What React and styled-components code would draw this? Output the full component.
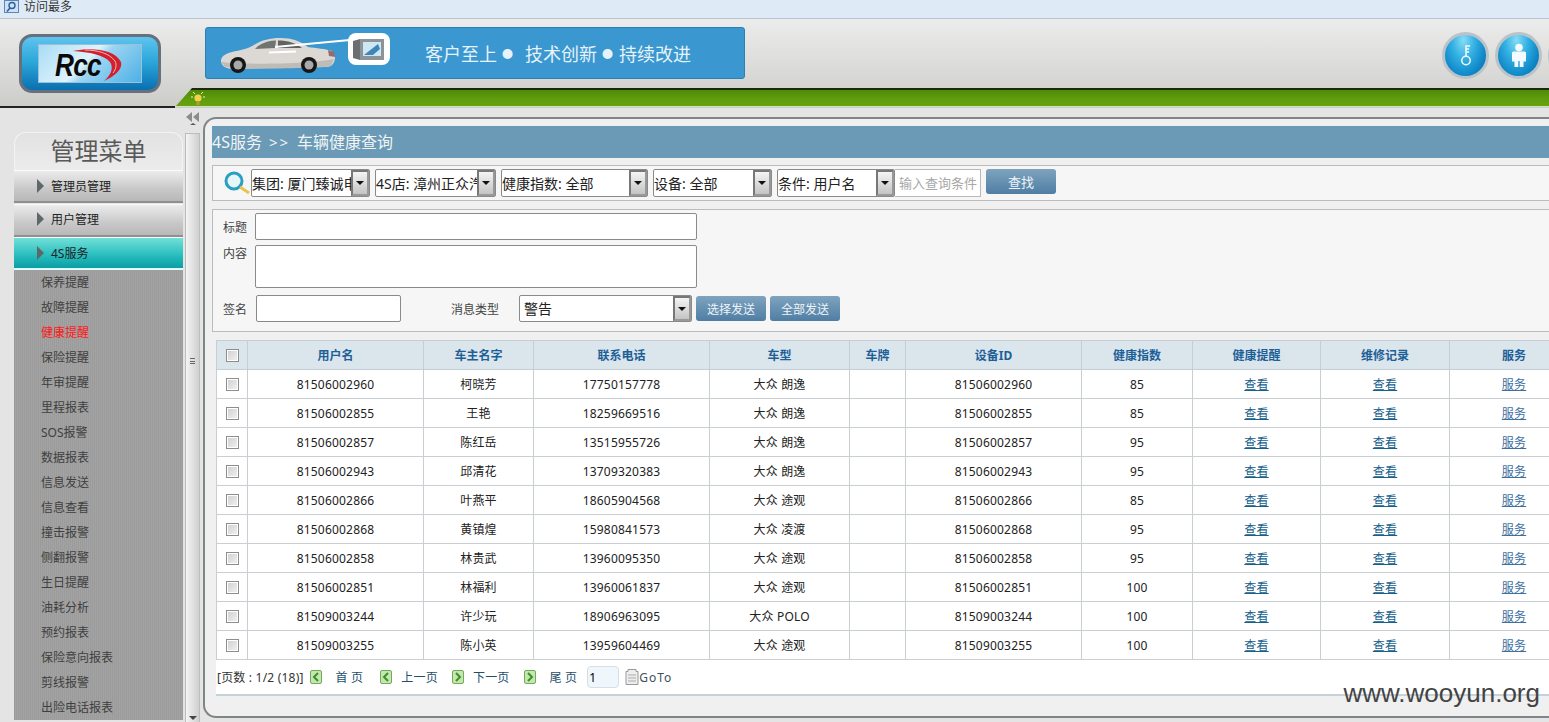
import React from 'react';
import styled, { createGlobalStyle } from 'styled-components';

const FONT = '"Noto Sans", "Noto Sans CJK SC", sans-serif';

const GlobalStyle = createGlobalStyle`
  html, body {
    margin: 0;
    height: 100%;
    overflow: hidden;
    background: #e4e4e4;
    font-family: ${FONT};
    font-size: 12px;
    color: #222;
  }
  * { box-sizing: border-box; }
`;

const Page = styled.div`
  position: relative;
  width: 100%;
  height: 722px;
  display: flex;
  flex-direction: column;
  overflow: hidden;
`;

const TitleBar = styled.div`
  height: 19px;
  flex: none;
  display: flex;
  align-items: center;
  gap: 5px;
  padding: 0 0 5px 4px;
  background: #dfeaf7;
  border-bottom: 1px solid #b9c3cc;
  color: #333;
  line-height: 12px;
`;

const Header = styled.header`
  height: 89px;
  flex: none;
  display: flex;
  flex-direction: column;
  background: linear-gradient(#ececec, #d6d6d4 70%, #cbcbc8);
  overflow: hidden;
`;

const HeaderTop = styled.div`
  height: 69px;
  flex: none;
  display: flex;
  align-items: flex-start;
`;

const Logo = styled.div`
  flex: none;
  width: 142px;
  height: 59px;
  margin: 15px 0 0 19px;
  padding: 7px 16px;
  border: 3px solid #66717c;
  border-radius: 13px;
  background: linear-gradient(#5ec4ee, #29a4d8 50%, #0a6fb0);
`;

const LogoPlate = styled.div`
  height: 39px;
  position: relative;
  border: 1px solid #9fc0d4;
  background: linear-gradient(135deg, #a8dcf6, #dff3fc 45%, #9ad4f2 55%, #4db1e6);
  display: flex;
  align-items: center;
  justify-content: center;
`;

const LogoWord = styled.span`
  position: relative;
  font-family: "Liberation Sans", sans-serif;
  font-style: italic;
  font-weight: 700;
  font-size: 32px;
  line-height: 1;
  letter-spacing: -1px;
  color: #0a0a0a;
  margin: 3px 24px 0 0;
  transform: scaleX(0.82);
`;

const Swoosh = styled.svg`
  position: absolute;
  left: 30px;
  top: 2px;
`;

const Banner = styled.div`
  flex: none;
  width: 540px;
  height: 52px;
  margin: 8px 0 0 44px;
  display: flex;
  align-items: center;
  background: #3a97d0;
  border: 1px solid #2c80b4;
  border-radius: 3px;
  color: #e6f3fb;
  font-size: 18px;
`;

const BannerText = styled.div`
  margin-left: 34px;
  display: flex;
  align-items: center;
  white-space: nowrap;
`;

const Bullet = styled.span`
  flex: none;
  width: ${p => p.$w}px;
  padding-left: 5px;
  font-size: 11px;
`;

const RoundGroup = styled.div`
  flex: none;
  display: flex;
  gap: 6px;
  margin: 13px 0 0 697px;
`;

const RoundButton = styled.div`
  flex: none;
  width: 47px;
  height: 47px;
  border-radius: 50%;
  display: flex;
  align-items: center;
  justify-content: center;
  border: 3px solid #bcc3c8;
  background: radial-gradient(ellipse at 45% 12%, #86dcf6 0, #35b2e4 35%, #0f88c8 70%, #0a6aa8);
`;

const GreenRow = styled.div`
  height: 20px;
  flex: none;
  display: flex;
`;

const RowLine = styled.div`
  width: 175px;
  flex: none;
  border-bottom: 2px solid #222;
`;

const GreenStrip = styled.div`
  flex: 1;
  position: relative;
  margin-bottom: 1px;
  border-top: 2px solid #1b2a08;
  background: linear-gradient(#4f8a08, #5f9c0d 55%, #67a30f);
  border-bottom: 1px solid #d4e2bc;
  clip-path: polygon(0 100%, 17px 0, 100% 0, 100% 100%);
`;

const Bulb = styled.svg`
  position: absolute;
  left: 16px;
  top: 1px;
`;

const Body = styled.div`
  flex: 1;
  min-height: 0;
  display: flex;
  background: #e4e4e4;
`;

const Sidebar = styled.aside`
  width: 183px;
  flex: none;
  padding: 24px 0 0 14px;
  overflow: hidden;
`;

const MenuTitle = styled.div`
  height: 38px;
  display: flex;
  align-items: center;
  justify-content: center;
  padding-bottom: 2px;
  border: 1px solid #f4f4f4;
  border-bottom: none;
  border-radius: 12px 12px 0 0;
  background: linear-gradient(#e2e2e2, #ececec);
  color: #595959;
  font-size: 24px;
  line-height: 1;
`;

const MenuItem = styled.div`
  height: 33px;
  margin-bottom: ${p => p.$gap}px;
  padding: 0 0 ${p => p.$lift || 0}px 23px;
  display: flex;
  align-items: center;
  gap: 7px;
  color: #222;
  border-top: 1px solid #fafafa;
  border-bottom: 2px solid ${p => (p.$active ? '#dff' : '#8f8f8f')};
  background: ${p => (p.$active
    ? 'linear-gradient(#72e0d8, #25bcbc 60%, #0b9ea4)'
    : 'linear-gradient(#ececec, #c8c8c8 60%, #b8b8b8)')};
`;

const Triangle = styled.span`
  width: 0;
  height: 0;
  border-style: solid;
  border-width: 7px 0 7px 7px;
  border-color: transparent transparent transparent #5f6868;
`;

const SubList = styled.div`
  background: repeating-linear-gradient(90deg, #9b9b9b 0 1px, #a3a3a3 1px 2px);
`;

const SubItem = styled.div`
  height: 25px;
  line-height: 25px;
  padding-left: 27px;
  color: ${p => (p.$active ? '#ff1a1a' : '#3f3f3f')};
`;

const Splitter = styled.div`
  width: 20px;
  flex: none;
  display: flex;
  flex-direction: column;
  align-items: center;
  padding: 2px 3px 0 2px;
`;

const Track = styled.div`
  flex: 1;
  width: 15px;
  margin-top: 7px;
  padding: 224px 0 2px;
  display: flex;
  flex-direction: column;
  align-items: center;
  justify-content: space-between;
  border: 1px solid #bdbdbd;
  border-bottom: none;
  background: linear-gradient(90deg, #f4f4f4, #cfcfcf);
`;

const TrackGrip = styled.span`
  width: 5px;
  height: 6px;
  border-top: 1px solid #666;
  border-bottom: 1px solid #666;
  background: linear-gradient(#666, #666) center / 100% 1px no-repeat;
`;

const TrackArrow = styled.span`
  border-style: solid;
  border-width: 0 4px 4px 4px;
  border-color: transparent transparent #444 transparent;
  transform: rotate(180deg);
`;

const Main = styled.main`
  flex: 1;
  min-width: 0;
  margin: 9px 0 4px 0;
  padding: 7px 0 0 7px;
  border: 2px solid #808587;
  border-right: none;
  border-radius: 13px 0 0 13px;
  background: #f0f0f0;
  overflow: hidden;
`;

const Content = styled.div`
  width: 1400px;
  display: flex;
  flex-direction: column;
`;

const PanelTitle = styled.div`
  height: 32px;
  line-height: 32px;
  background: #6a9ab5;
  color: #f1f4f6;
  font-size: 16px;
  white-space: nowrap;
`;

const Crumb = styled.span`
  padding: 0 7px;
  letter-spacing: 2px;
  font-size: 15px;
`;

const SearchBar = styled.div`
  height: 36px;
  margin-top: 7px;
  display: flex;
  align-items: center;
  padding-left: 10px;
  background: #f6f6f6;
  border: 1px solid #bcbcbc;
`;

const SelectBox = styled.div`
  flex: none;
  width: ${p => p.$w}px;
  height: ${p => p.$h || 28}px;
  margin-left: ${p => p.$ml || 0}px;
  display: flex;
  align-items: stretch;
  background: #fff;
  border: 1px solid #8a8a8a;
  border-radius: 2px;
  font-size: 14px;
  overflow: hidden;
`;

const SelectText = styled.span`
  flex: 1;
  min-width: 0;
  padding-left: ${p => p.$pad || 0}px;
  line-height: ${p => p.$lh || 27}px;
  white-space: nowrap;
  overflow: hidden;
`;

const SelectArrow = styled.span`
  flex: none;
  width: 18px;
  display: flex;
  align-items: center;
  justify-content: center;
  border: 2px solid #777;
  border-right-color: #999;
  border-bottom-color: #999;
  background: linear-gradient(#f4f4f4, #c4c4c4);

  &::after {
    content: '';
    border-style: solid;
    border-width: 4px 4px 0 4px;
    border-color: #111 transparent transparent transparent;
  }
`;

const QueryInput = styled.input`
  flex: none;
  width: 86px;
  height: 28px;
  padding: 0 0 0 4px;
  background: #fff;
  border: 1px solid #b8b8b8;
  border-left: none;
  font-family: ${FONT};
  font-size: 13px;

  &::placeholder { color: #a8a8a8; opacity: 1; }
`;

const BlueButton = styled.button`
  flex: none;
  width: 70px;
  height: 25px;
  margin-left: ${p => p.$ml}px;
  margin-top: ${p => p.$mt || 0}px;
  padding: 0;
  border: none;
  border-radius: 3px;
  background: linear-gradient(#7ea3bf, #4f7ea3);
  color: #eef4f8;
  font-family: ${FONT};
  font-size: ${p => p.$size || 12}px;
`;

const FormPanel = styled.div`
  height: 123px;
  margin-top: 8px;
  padding: 3px 0 0 10px;
  display: flex;
  flex-direction: column;
  background: #f6f6f6;
  border: 1px solid #bcbcbc;
`;

const FormRow = styled.div`
  display: flex;
  align-items: ${p => (p.$top ? 'flex-start' : 'center')};
  margin-bottom: ${p => p.$mb || 0}px;
`;

const FieldLabel = styled.label`
  flex: none;
  width: ${p => p.$w || 32}px;
  margin-left: ${p => p.$ml || 0}px;
  line-height: ${p => (p.$top ? '18px' : 'normal')};
  color: #444;
`;

const TextField = styled.input`
  flex: none;
  display: block;
  width: ${p => p.$w}px;
  height: 27px;
  background: #fff;
  border: 1px solid #8a8a8a;
  border-radius: 2px;
`;

const TextArea = styled.textarea`
  flex: none;
  display: block;
  width: 442px;
  height: 43px;
  background: #fff;
  border: 1px solid #8a8a8a;
  border-radius: 2px;
  resize: none;
`;

const TablePanel = styled.div`
  margin: 8px 0 0 4px;
  width: 1362px;
  background: #fff;
  border-bottom: 2px solid #c6d2da;
`;

const Table = styled.table`
  width: 1362px;
  table-layout: fixed;
  border-collapse: collapse;
`;

const Col = styled.col`
  width: ${p => p.$w}px;
`;

const HeadCell = styled.th`
  height: 29px;
  padding: 0;
  background: #dbe5ec;
  border: 1px solid #c3ced6;
  color: #1c6098;
  font-size: 12px;
  font-weight: 700;
`;

const Cell = styled.td`
  height: 29px;
  padding: 0;
  text-align: center;
  border: 1px solid #c9ced2;
  color: #222;
  font-size: 12px;
  letter-spacing: 0.2px;
`;

const RowLink = styled.a`
  color: ${p => (p.$soft ? '#3d6f9f' : '#16608c')};
  text-decoration: underline;
`;

const Check = styled.input.attrs({ type: 'checkbox' })`
  appearance: none;
  display: block;
  width: 13px;
  height: 13px;
  margin: 0 auto;
  border: 1px solid #8d8d8d;
  background: linear-gradient(135deg, #cfcfcf, #f2f2f2);
  box-shadow: inset 0 0 0 1px #fff;
`;

const Pager = styled.div`
  height: 34px;
  display: flex;
  align-items: center;
  padding-left: 1px;
  color: #333;
  white-space: nowrap;
`;

const PageCount = styled.span`
  letter-spacing: 0.2px;
`;

const PageLabel = styled.span`
  margin-left: ${p => p.$ml}px;
  letter-spacing: 0.2px;
  color: #1f4f6c;
`;

const PageIcon = styled.svg`
  flex: none;
  margin-left: ${p => p.$ml}px;
`;

const PageInput = styled.input`
  flex: none;
  width: 32px;
  height: 22px;
  margin-left: 10px;
  padding: 0 0 0 1px;
  border: 1px solid #d5dfe6;
  border-radius: 4px;
  background: #f0f7fc;
  font-family: ${FONT};
  font-size: 12px;
`;

const GoTo = styled.span`
  letter-spacing: 1px;
  color: #3f4f58;
`;

const Watermark = styled.div`
  position: absolute;
  right: 9px;
  top: 678px;
  font-family: "Liberation Sans", sans-serif;
  font-size: 26px;
  color: #444;
`;

const Car = () => (
  <g>
    <path d="M1 28C1 24 4 21 12 19c8-2 16-3 22-7C42 7 50 5 60 5c12 0 20 3 28 9 8 1 18 2 24 4l3 6c0 6-3 10-9 10L14 36C6 36 1 33 1 28z" fill="#dcd9d5" />
    <path d="M38 13c6-4 12-5.500 18-5.500L55 15l-20 1z" fill="#6f7470" />
    <path d="M58 7.500c10 0 18 2.500 24 7.500H58z" fill="#5f6460" />
    <path d="M1 29c20 3 92 2 113-3l-3 7c-5 2-90 4-106 1z" fill="#bfbcb8" />
    <path d="M108 17l6 2 1 5-6-1z" fill="#9a6a6a" />
    <circle cx="18" cy="32" r="8" fill="#161616" />
    <circle cx="18" cy="32" r="4.500" fill="#a9a9a9" />
    <circle cx="89" cy="32" r="8" fill="#161616" />
    <circle cx="89" cy="32" r="4.500" fill="#a9a9a9" />
    <path d="M49 19.500l27-1" stroke="#fff" strokeWidth="2" />
  </g>
);

const Screen = () => (
  <g>
    <rect width="42" height="32" rx="8" fill="#fff" />
    <path d="M5 8l7-2v21l-7-2z" fill="#6b6f72" />
    <rect x="12" y="6" width="24" height="21" fill="#8d9498" />
    <rect x="15" y="9" width="18" height="14" fill="#cfe6f3" />
    <path d="M16 22l14-11 2 5-7 6z" fill="#3f86b8" />
  </g>
);

const Key = () => (
  <svg width="12" height="21" viewBox="0 0 12 21" fill="none" stroke="#f2fafe" strokeWidth="1.500">
    <circle cx="6" cy="15.500" r="4.200" />
    <path d="M6 11V1h4M6 4h3M6 7h3" />
  </svg>
);

const Person = () => (
  <svg width="16" height="25" viewBox="0 0 16 25" fill="#f4fbfe">
    <circle cx="8" cy="4.500" r="3.800" />
    <path d="M1 10c0-1 1-1.500 2-1.500h10c1 0 2 .5 2 1.500v8.500h-2.500V24H8.700v-6H7.300v6H3.500v-5.500H1z" />
  </svg>
);

const PageArrow = ({ dir, ml }) => (
  <PageIcon $ml={ml} width="12" height="14" viewBox="0 0 12 14">
    <rect x=".5" y=".5" width="11" height="13" rx="1.500" fill="#c5e6b0" stroke="#6fae55" />
    <path d={dir === 'left' ? 'M8 3L4 7l4 4' : 'M4 3l4 4-4 4'} stroke="#3d8f2c" strokeWidth="2" fill="none" />
  </PageIcon>
);

const columns = [31, 176, 110, 176, 140, 56, 176, 111, 128, 129, 129];
const headers = ['用户名', '车主名字', '联系电话', '车型', '车牌', '设备ID', '健康指数', '健康提醒', '维修记录', '服务'];

const rows = [
  ['81506002960', '柯晓芳', '17750157778', '大众 朗逸', '85'],
  ['81506002855', '王艳', '18259669516', '大众 朗逸', '85'],
  ['81506002857', '陈红岳', '13515955726', '大众 朗逸', '95'],
  ['81506002943', '邱清花', '13709320383', '大众 朗逸', '95'],
  ['81506002866', '叶燕平', '18605904568', '大众 途观', '85'],
  ['81506002868', '黄镇煌', '15980841573', '大众 凌渡', '95'],
  ['81506002858', '林贵武', '13960095350', '大众 途观', '95'],
  ['81506002851', '林福利', '13960061837', '大众 途观', '100'],
  ['81509003244', '许少玩', '18906963095', '大众 POLO', '100'],
  ['81509003255', '陈小英', '13959604469', '大众 途观', '100'],
];

const subMenu = ['保养提醒', '故障提醒', '健康提醒', '保险提醒', '年审提醒', '里程报表', 'SOS报警', '数据报表', '信息发送', '信息查看', '撞击报警', '侧翻报警', '生日提醒', '油耗分析', '预约报表', '保险意向报表', '剪线报警', '出险电话报表'];

export default function App() {
  return (
    <Page>
      <GlobalStyle />
      <TitleBar>
        <svg width="15" height="13" viewBox="0 0 15 13">
          <rect x=".5" y=".5" width="14" height="12" fill="#cfe2f5" stroke="#5b86b5" />
          <circle cx="8" cy="5.500" r="3" fill="none" stroke="#2b5f9a" strokeWidth="1.400" />
          <path d="M6 8l-3 3.500" stroke="#2b5f9a" strokeWidth="1.600" />
        </svg>
        访问最多
      </TitleBar>

      <Header>
        <HeaderTop>
          <Logo>
            <LogoPlate>
              <LogoWord>Rcc</LogoWord>
              <Swoosh width="56" height="36" viewBox="0 0 56 36">
                <path d="M4 4C22 0 46 2 52 15c2 8-8 15-17 19 7-6 10-13 6-19C35 8 20 5 4 4z" fill="#d3202c" />
                <path d="M16 3c12 0 24 3 30 11 2 4 1 8-2 12" stroke="#f0b9b9" strokeWidth="1" fill="none" />
              </Swoosh>
            </LogoPlate>
          </Logo>
          <Banner>
            <svg width="185" height="50" viewBox="0 0 185 50">
              <g transform="translate(14 5)"><Car /></g>
              <path d="M69 19L144 12" stroke="#fff" strokeWidth="2" />
              <g transform="translate(142 5)"><Screen /></g>
            </svg>
            <BannerText>
              客户至上<Bullet $w={28}>●</Bullet>技术创新<Bullet $w={22}>●</Bullet>持续改进
            </BannerText>
          </Banner>
          <RoundGroup>
            <RoundButton><Key /></RoundButton>
            <RoundButton><Person /></RoundButton>
            <RoundButton />
          </RoundGroup>
        </HeaderTop>
        <GreenRow>
          <RowLine />
          <GreenStrip>
            <Bulb width="14" height="15" viewBox="0 0 14 15">
              <circle cx="7" cy="7" r="3.600" fill="#f2d24a" />
              <rect x="5.500" y="10" width="3" height="4" fill="#b99c32" />
              <path d="M2 1l2 2M12 1l-2 2M0 6h2M14 6h-2" stroke="#f4f0b8" />
            </Bulb>
          </GreenStrip>
        </GreenRow>
      </Header>

      <Body>
        <Sidebar>
          <MenuTitle>管理菜单</MenuTitle>
          <MenuItem $gap={1}><Triangle />管理员管理</MenuItem>
          <MenuItem $gap={0} $lift={2}><Triangle />用户管理</MenuItem>
          <MenuItem $gap={0} $active><Triangle />4S服务</MenuItem>
          <SubList>
            {subMenu.map(name => (
              <SubItem key={name} $active={name === '健康提醒'}>{name}</SubItem>
            ))}
          </SubList>
        </Sidebar>

        <Splitter>
          <svg width="15" height="16" viewBox="0 0 15 16">
            <path d="M7 2L1 7l6 5zM14 2L8 7l6 5z" fill="#8c8c8c" />
            <path d="M5 15l3-2 3 2z" fill="#555" />
          </svg>
          <Track>
            <TrackGrip />
            <TrackArrow />
          </Track>
        </Splitter>

        <Main>
          <Content>
            <PanelTitle>4S服务<Crumb>&gt;&gt;</Crumb>车辆健康查询</PanelTitle>
            <SearchBar>
              <svg width="28" height="24" viewBox="0 0 28 24">
                <circle cx="11" cy="10" r="8" fill="#e6f6fb" stroke="#2aa0c0" strokeWidth="3" />
                <path d="M17 16l9 6" stroke="#e8c34e" strokeWidth="3" />
              </svg>
              <SelectBox $w={119}><SelectText>集团: 厦门臻诚电子</SelectText><SelectArrow /></SelectBox>
              <SelectBox $w={121} $ml={5}><SelectText>4S店: 漳州正众汽车</SelectText><SelectArrow /></SelectBox>
              <SelectBox $w={147} $ml={5}><SelectText>健康指数: 全部</SelectText><SelectArrow /></SelectBox>
              <SelectBox $w={119} $ml={5}><SelectText>设备: 全部</SelectText><SelectArrow /></SelectBox>
              <SelectBox $w={118} $ml={5}><SelectText>条件: 用户名</SelectText><SelectArrow /></SelectBox>
              <QueryInput placeholder="输入查询条件" />
              <BlueButton $ml={5} $mt={-4} $size={13}>查找</BlueButton>
            </SearchBar>

            <FormPanel>
              <FormRow $mb={5}>
                <FieldLabel>标题</FieldLabel>
                <TextField $w={442} />
              </FormRow>
              <FormRow $mb={7} $top>
                <FieldLabel $top>内容</FieldLabel>
                <TextArea />
              </FormRow>
              <FormRow>
                <FieldLabel $w={33}>签名</FieldLabel>
                <TextField $w={145} />
                <FieldLabel $ml={50} $w={68}>消息类型</FieldLabel>
                <SelectBox $w={173} $h={27}><SelectText $pad={4} $lh={25}>警告</SelectText><SelectArrow /></SelectBox>
                <BlueButton $ml={4}>选择发送</BlueButton>
                <BlueButton $ml={4}>全部发送</BlueButton>
              </FormRow>
            </FormPanel>

            <TablePanel>
              <Table>
                <colgroup>
                  {columns.map((w, i) => <Col key={i} $w={w} />)}
                </colgroup>
                <thead>
                  <tr>
                    <HeadCell><Check /></HeadCell>
                    {headers.map(h => <HeadCell key={h}>{h}</HeadCell>)}
                  </tr>
                </thead>
                <tbody>
                  {rows.map(r => (
                    <tr key={r[0]}>
                      <Cell><Check /></Cell>
                      <Cell>{r[0]}</Cell>
                      <Cell>{r[1]}</Cell>
                      <Cell>{r[2]}</Cell>
                      <Cell>{r[3]}</Cell>
                      <Cell />
                      <Cell>{r[0]}</Cell>
                      <Cell>{r[4]}</Cell>
                      <Cell><RowLink>查看</RowLink></Cell>
                      <Cell><RowLink>查看</RowLink></Cell>
                      <Cell><RowLink $soft>服务</RowLink></Cell>
                    </tr>
                  ))}
                </tbody>
              </Table>
              <Pager>
                <PageCount>[页数 : 1/2 (18)]</PageCount>
                <PageArrow dir="left" ml={6} />
                <PageLabel $ml={14}>首 页</PageLabel>
                <PageArrow dir="left" ml={17} />
                <PageLabel $ml={9}>上一页</PageLabel>
                <PageArrow dir="right" ml={14} />
                <PageLabel $ml={9}>下一页</PageLabel>
                <PageArrow dir="right" ml={14} />
                <PageLabel $ml={14}>尾 页</PageLabel>
                <PageInput defaultValue="1" />
                <PageIcon $ml={6} width="14" height="16" viewBox="0 0 14 16">
                  <path d="M3 .5h8v2h2v13H1v-13h2z" fill="#eee" stroke="#999" />
                  <path d="M3 6h8M3 9h8M3 12h8" stroke="#aaa" />
                </PageIcon>
                <GoTo>GoTo</GoTo>
              </Pager>
            </TablePanel>
          </Content>
        </Main>
      </Body>

      <Watermark>www.wooyun.org</Watermark>
    </Page>
  );
}
